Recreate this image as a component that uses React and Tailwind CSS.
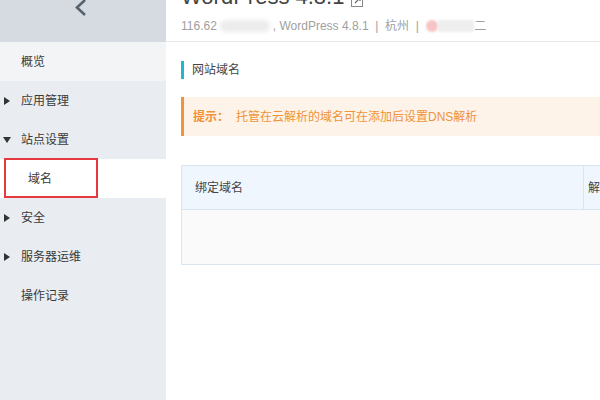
import React from 'react';

const font = { fontFamily: '"Liberation Sans", "Noto Sans CJK SC", sans-serif' };

const Caret = ({ open }) => (
  <svg width="6" height="8" viewBox="0 0 6 8" className={open ? 'rotate-90' : ''}>
    <path d="M0 0 L6 4 L0 8 Z" fill="#333" />
  </svg>
);

const menu = [
  { label: '概览', caret: false, active: true },
  { label: '应用管理', caret: 'closed' },
  { label: '站点设置', caret: 'open' },
  { label: '域名', sub: true },
  { label: '安全', caret: 'closed' },
  { label: '服务器运维', caret: 'closed' },
  { label: '操作记录', caret: false },
];

export default function App() {
  return (
    <div className="w-[600px] h-[400px] flex overflow-hidden bg-white text-[#3a3a3a]" style={font}>
      {/* sidebar */}
      <div className="w-[166px] shrink-0 bg-[#e9ecf0] flex flex-col">
        <div className="h-[42px] bg-[#d6dbe1] flex justify-center">
          <svg width="16" height="18" viewBox="0 0 16 18" className="ml-[-4px]">
            <path d="M12 0 L4 7.5 L12 15" stroke="#556270" strokeWidth="2.6" fill="none" />
          </svg>
        </div>
        {menu.map((m) => (
          <div
            key={m.label}
            className={`h-[39px] flex items-center text-[12px] ${m.active ? 'bg-[#f2f4f6]' : ''} ${m.sub ? 'bg-white relative' : ''}`}
          >
            {m.sub ? (
              <>
                <div className="absolute left-[4px] top-[-1px] w-[94px] h-[40px] border-2 border-[#e3393f]" />
                <span className="pl-[28px]">{m.label}</span>
              </>
            ) : (
              <>
                <span className="w-[21px] flex justify-start pl-[4px]">
                  {m.caret === 'closed' && <Caret />}
                  {m.caret === 'open' && <Caret open />}
                </span>
                <span>{m.label}</span>
              </>
            )}
          </div>
        ))}
      </div>

      {/* main */}
      <div className="flex-1 flex flex-col min-w-0">
        <div className="h-[42px] border-b border-[#e8e8e8] pl-[15px] overflow-hidden">
          <div className="flex items-center gap-[7px] mt-[-17px] text-[22px] text-[#444] leading-[28px]">
            <span>WordPress 4.8.1</span>
            <svg width="12" height="12" viewBox="0 0 12 12" className="mt-[7px]">
              <rect x="0.5" y="0.5" width="11" height="11" fill="none" stroke="#888" />
              <path d="M4 8 L9 3 M6 3 H9 V6" stroke="#666" strokeWidth="1.2" fill="none" />
            </svg>
          </div>
          <div className="flex items-center text-[12px] text-[#a0a0a0] mt-[6px] whitespace-nowrap">
            <span>116.62</span>
            <span className="w-[50px] h-[12px] bg-[#ececec] rounded-full blur-[2px] mx-[3px]" />
            <span>, WordPress 4.8.1 &nbsp;|&nbsp; 杭州 &nbsp;|&nbsp;</span>
            <span className="w-[12px] h-[12px] bg-[#f6c4c4] rounded-full blur-[1px] ml-[4px]" />
            <span className="w-[36px] h-[12px] bg-[#eeeeee] blur-[1px]" />
            <span>二</span>
          </div>
        </div>

        <div className="pl-[15px] pt-[19px]">
          <div className="flex items-center h-[18px]">
            <div className="w-[3px] h-[18px] bg-[#1fb6d2]" />
            <span className="ml-[8px] text-[12px] text-[#444]">网站域名</span>
          </div>

          <div className="mt-[18px] h-[39px] bg-[#fdf3e8] border-l-[3px] border-[#f0933a] flex items-center pl-[9px] text-[12px] text-[#f0923a]">
            <span className="font-bold">提示：</span>
            <span className="ml-[7px]">托管在云解析的域名可在添加后设置DNS解析</span>
          </div>

          <div className="mt-[29px] border border-[#d9e6f2] border-r-0">
            <div className="h-[43px] bg-[#eff6fd] flex text-[12px] text-[#444]">
              <div className="w-[403px] flex items-center pl-[13px] border-r border-[#d9e6f2]">绑定域名</div>
              <div className="flex-1 flex items-center pl-[4px]">解</div>
            </div>
            <div className="h-[55px] bg-[#fafafa] border-t border-[#d9e6f2]" />
          </div>
        </div>
      </div>
    </div>
  );
}
